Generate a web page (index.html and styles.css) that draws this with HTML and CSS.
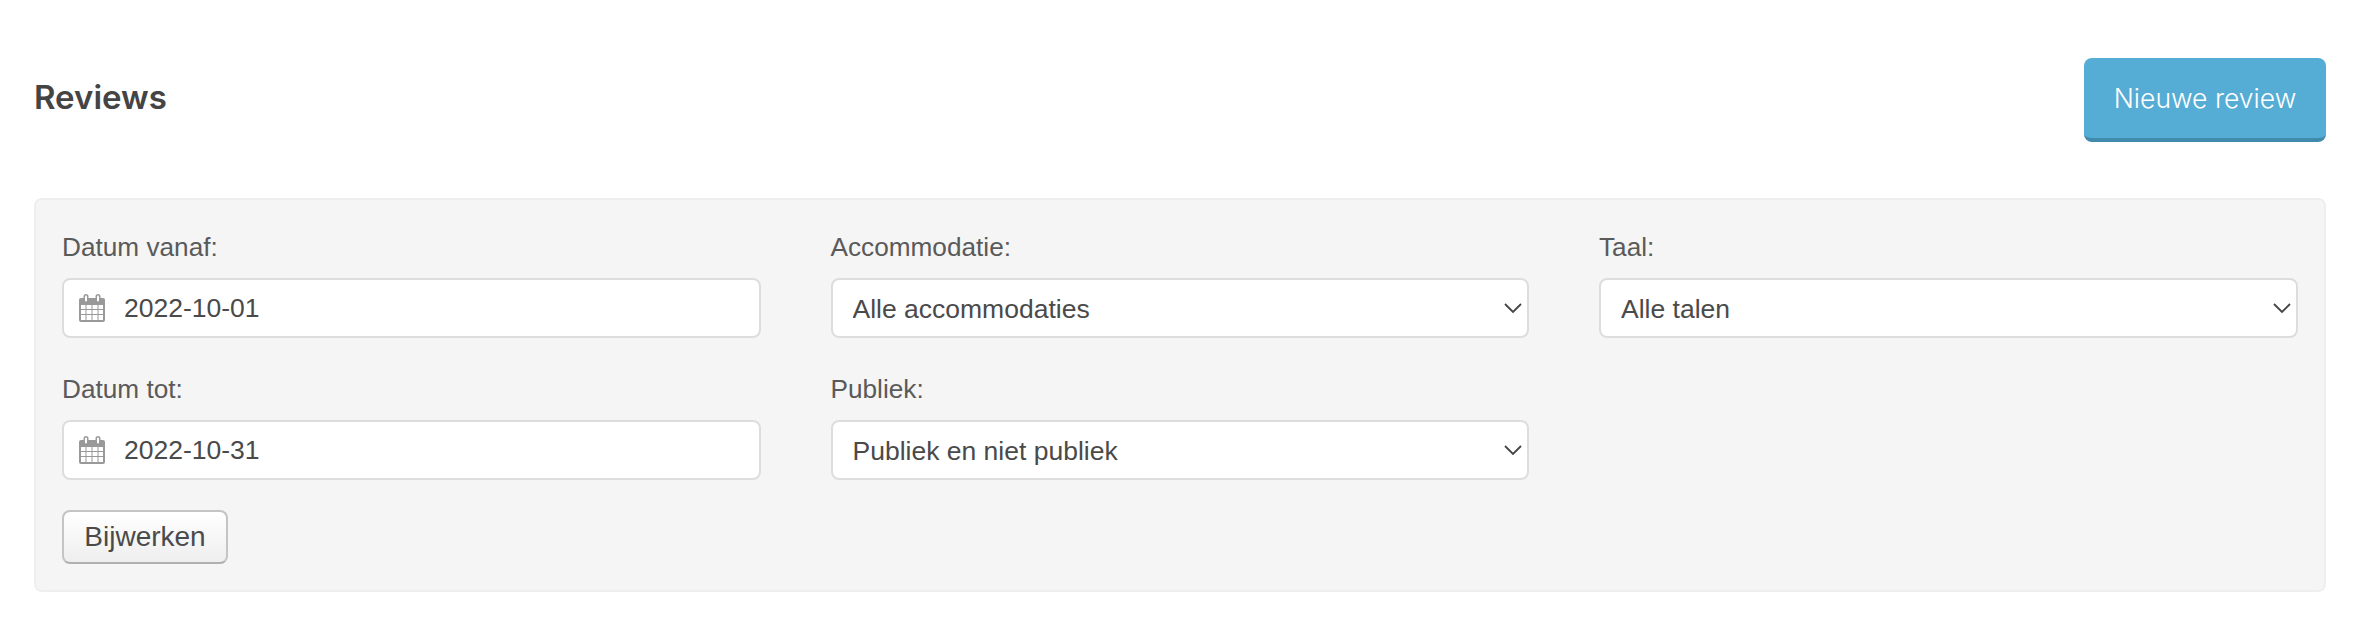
FILE: index.html
```html
<!DOCTYPE html>
<html lang="nl">
<head>
    <meta charset="UTF-8">
    <title>Reviews</title>
    <link rel="stylesheet" href="styles.css">
</head>
<body>
    <header class="page-header">
        <h1>Reviews</h1>
        <a class="btn-new" href="#">Nieuwe review</a>
    </header>

    <form class="filter-panel">
        <div class="filter-grid">
            <div class="form-group">
                <label for="dateFrom">Datum vanaf:</label>
                <div class="date-field">
                    <svg class="calendar-icon" viewBox="0 0 26 28" aria-hidden="true">
                        <path fill="#999" fill-rule="evenodd" d="M2 4h22a2 2 0 0 1 2 2v20a2 2 0 0 1-2 2H2a2 2 0 0 1-2-2V6a2 2 0 0 1 2-2zM2 11v4h4.500v-4zM7.500 11v4h5v-4zM13.500 11v4h5v-4zM19.500 11v4H24v-4zM2 16v4h4.500v-4zM7.500 16v4h5v-4zM13.500 16v4h5v-4zM19.500 16v4H24v-4zM2 21v5h4.500v-5zM7.500 21v5h5v-5zM13.500 21v5h5v-5zM19.500 21v5H24v-5z"/>
                        <rect x="4.500" y="0" width="5" height="9" rx="2.500" fill="#999"/>
                        <rect x="16.500" y="0" width="5" height="9" rx="2.500" fill="#999"/>
                        <rect x="6" y="1.500" width="2" height="6" rx="1" fill="#fff"/>
                        <rect x="18" y="1.500" width="2" height="6" rx="1" fill="#fff"/>
                    </svg>
                    <input type="text" id="dateFrom" value="2022-10-01">
                </div>
            </div>
            <div class="form-group">
                <label for="accommodation">Accommodatie:</label>
                <div class="select-field">
                    <select id="accommodation">
                        <option>Alle accommodaties</option>
                    </select>
                    <svg class="chevron" viewBox="0 0 18 11" aria-hidden="true"><path d="M1 1l8 8 8-8" fill="none" stroke="#444" stroke-width="1.800"/></svg>
                </div>
            </div>
            <div class="form-group">
                <label for="language">Taal:</label>
                <div class="select-field">
                    <select id="language">
                        <option>Alle talen</option>
                    </select>
                    <svg class="chevron" viewBox="0 0 18 11" aria-hidden="true"><path d="M1 1l8 8 8-8" fill="none" stroke="#444" stroke-width="1.800"/></svg>
                </div>
            </div>
            <div class="form-group">
                <label for="dateTo">Datum tot:</label>
                <div class="date-field">
                    <svg class="calendar-icon" viewBox="0 0 26 28" aria-hidden="true">
                        <path fill="#999" fill-rule="evenodd" d="M2 4h22a2 2 0 0 1 2 2v20a2 2 0 0 1-2 2H2a2 2 0 0 1-2-2V6a2 2 0 0 1 2-2zM2 11v4h4.500v-4zM7.500 11v4h5v-4zM13.500 11v4h5v-4zM19.500 11v4H24v-4zM2 16v4h4.500v-4zM7.500 16v4h5v-4zM13.500 16v4h5v-4zM19.500 16v4H24v-4zM2 21v5h4.500v-5zM7.500 21v5h5v-5zM13.500 21v5h5v-5zM19.500 21v5H24v-5z"/>
                        <rect x="4.500" y="0" width="5" height="9" rx="2.500" fill="#999"/>
                        <rect x="16.500" y="0" width="5" height="9" rx="2.500" fill="#999"/>
                        <rect x="6" y="1.500" width="2" height="6" rx="1" fill="#fff"/>
                        <rect x="18" y="1.500" width="2" height="6" rx="1" fill="#fff"/>
                    </svg>
                    <input type="text" id="dateTo" value="2022-10-31">
                </div>
            </div>
            <div class="form-group">
                <label for="visibility">Publiek:</label>
                <div class="select-field">
                    <select id="visibility">
                        <option>Publiek en niet publiek</option>
                    </select>
                    <svg class="chevron" viewBox="0 0 18 11" aria-hidden="true"><path d="M1 1l8 8 8-8" fill="none" stroke="#444" stroke-width="1.800"/></svg>
                </div>
            </div>
        </div>
        <button type="button" class="btn-update">Bijwerken</button>
    </form>
</body>
</html>
```

FILE: styles.css
```css
body {
    margin: 0;
    padding: 58px 32px 0 34px;
    background: #fff;
    font-family: "Liberation Sans", Arial, sans-serif;
    color: #555;
}

.page-header {
    display: flex;
    justify-content: space-between;
    align-items: flex-start;
    margin-bottom: 56px;
}

h1 {
    margin: 0;
    font-family: Inter, sans-serif;
    font-size: 33px;
    font-weight: 600;
    line-height: 78px;
    color: #444;
}

.btn-new {
    box-sizing: border-box;
    width: 242px;
    height: 84px;
    line-height: 80px;
    text-align: center;
    background: #55acd5;
    border-bottom: 4px solid #408aab;
    border-radius: 8px;
    color: #fff;
    font-family: Inter, sans-serif;
    font-size: 26.5px;
    font-weight: 300;
    text-decoration: none;
}

.filter-panel {
    box-sizing: border-box;
    height: 394px;
    padding: 29px 26px 0;
    background: #f5f5f5;
    border: 2px solid #eee;
    border-radius: 8px;
}

.filter-grid {
    display: grid;
    grid-template-columns: repeat(3, 698.5px);
    column-gap: 70px;
    row-gap: 33px;
}

label {
    display: block;
    height: 36px;
    margin-bottom: 13px;
    line-height: 36px;
    font-size: 26.2px;
    color: #5a5a5a;
}

.date-field,
.select-field {
    position: relative;
}

input,
select {
    display: block;
    box-sizing: border-box;
    width: 100%;
    height: 60px;
    background: #fff;
    border: 2px solid #ddd;
    border-radius: 8px;
    color: #4a4a4a;
    outline: none;
    font-family: "Liberation Sans", Arial, sans-serif;
    font-size: 26.5px;
}

input {
    padding: 0 0 0 60px;
}

select {
    appearance: none;
    padding: 2px 40px 0 20px;
}

.calendar-icon {
    position: absolute;
    left: 17px;
    top: 16px;
    width: 26px;
    height: 28px;
}

.chevron {
    position: absolute;
    right: 7px;
    top: 25px;
    width: 18px;
    height: 11px;
}

.btn-update {
    display: block;
    box-sizing: border-box;
    width: 166px;
    height: 54px;
    margin-top: 30px;
    padding: 0;
    background: linear-gradient(#fff, #eee);
    border: 2px solid #c4c4c4;
    border-bottom-color: #b0b0b0;
    border-radius: 8px;
    color: #4a4a4a;
    font-family: "Liberation Sans", Arial, sans-serif;
    font-size: 28px;
}
```
